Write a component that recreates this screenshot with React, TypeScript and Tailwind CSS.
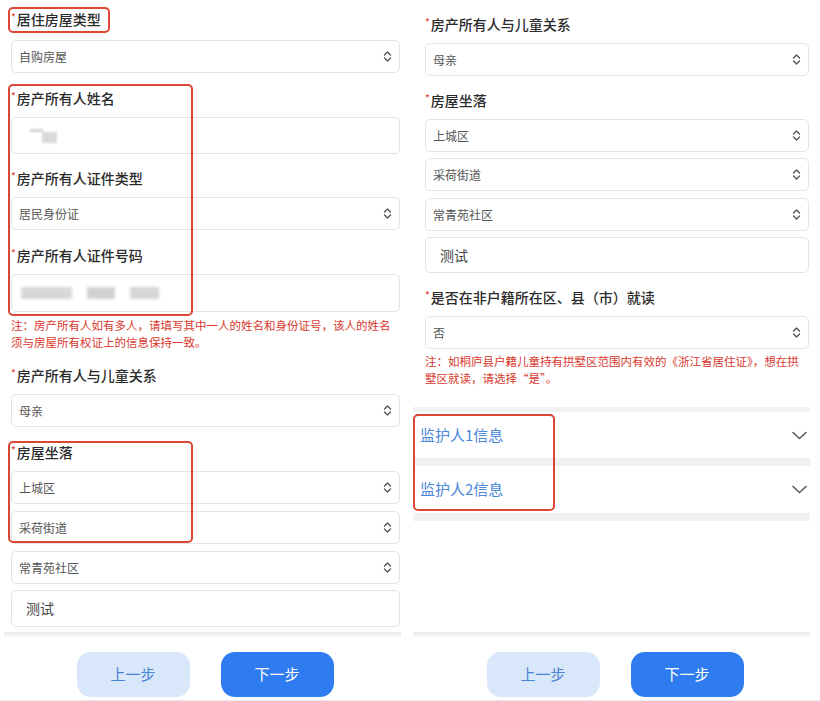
import React from "react";

const font = "font-['Noto_Sans_CJK_SC',sans-serif]";

function UpDown() {
    return (
        <svg width="9" height="13" viewBox="0 0 9 13" fill="none">
            <path d="M1.5 5 L4.5 2 L7.5 5" stroke="#555" strokeWidth="1.4" strokeLinecap="round" strokeLinejoin="round" />
            <path d="M1.5 8 L4.5 11 L7.5 8" stroke="#555" strokeWidth="1.4" strokeLinecap="round" strokeLinejoin="round" />
        </svg>
    );
}

function Chevron() {
    return (
        <svg width="15" height="9" viewBox="0 0 15 9" fill="none">
            <path d="M1 1.5 L7.5 7.5 L14 1.5" stroke="#555" strokeWidth="1.5" strokeLinecap="round" strokeLinejoin="round" />
        </svg>
    );
}

function Label({ text, className = "" }: { text: string; className?: string }) {
    return (
        <div className={`h-5 flex items-center text-[14px] font-medium text-[#2b2b2b] ${className}`}>
            <span className="text-[#e2463a] text-[10px] leading-none self-start mt-[3px] mr-[1px]">*</span>
            {text}
        </div>
    );
}

function Select({ value, className = "" }: { value: string; className?: string }) {
    return (
        <div className={`h-[33px] border border-[#e4e4e4] rounded-[5px] flex items-center justify-between pl-[7px] pr-[7px] text-[12px] text-[#555] bg-white ${className}`}>
            <span>{value}</span>
            <UpDown />
        </div>
    );
}

function Input({ children, className = "" }: { children?: React.ReactNode; className?: string }) {
    return (
        <div className={`border border-[#e4e4e4] rounded-[5px] flex items-center pl-[14px] text-[14px] text-[#444] bg-white ${className}`}>
            {children}
        </div>
    );
}

function Note({ children, className = "" }: { children: React.ReactNode; className?: string }) {
    return <p className={`text-[11.5px] leading-[17px] text-[#d8382d] ${className}`}>{children}</p>;
}

function Footer() {
    return (
        <div className="h-[64px] border-b border-[#e8e8e8] flex justify-center gap-[31px] pt-[15px]">
            <button className="w-[113px] h-[45px] rounded-[14px] bg-[#d8e7f9] text-[#4a83d4] text-[15px]">上一步</button>
            <button className="w-[113px] h-[45px] rounded-[14px] bg-[#2e7cf0] text-white text-[15px]">下一步</button>
        </div>
    );
}

function Mark({ className }: { className: string }) {
    return <div className={`absolute border-2 border-[#db4733] rounded-[5px] pointer-events-none ${className}`} />;
}

function Band({ className = "" }: { className?: string }) {
    return <div className={`h-[5px] bg-gradient-to-b from-[#ececec] to-[#f7f7f7] ${className}`} />;
}

export default function App() {
    return (
        <div className={`w-[820px] h-[701px] bg-white flex overflow-hidden ${font}`}>
            {/* left screen */}
            <div className="relative w-[410px] flex flex-col">
                <div className="h-[637px] flex flex-col">
                    <div className="pl-[11px] pr-[10px] pt-[9px]">
                        <Label text="居住房屋类型" />
                        <Select value="自购房屋" className="mt-[11px]" />
                        <Label text="房产所有人姓名" className="mt-[15px]" />
                        <Input className="mt-[9px] h-[37px]">
                            <div className="relative w-[30px] h-[20px] blur-[1px]">
                                <div className="absolute left-[4px] top-[3px] w-[13px] h-[3px] bg-[#d4d4d4]" />
                                <div className="absolute left-[16px] top-[6px] w-[15px] h-[11px] bg-[#d9d9d9]" />
                            </div>
                        </Input>
                        <Label text="房产所有人证件类型" className="mt-[14px]" />
                        <Select value="居民身份证" className="mt-[9px]" />
                        <Label text="房产所有人证件号码" className="mt-[15px]" />
                        <Input className="mt-[9px] h-[38px] !pl-[9px]">
                            <div className="flex items-center gap-[15px] blur-[1.5px]">
                                <div className="w-[51px] h-[12px] bg-[#d8d8d8]" />
                                <div className="w-[28px] h-[12px] bg-[#d2d2d2]" />
                                <div className="w-[29px] h-[12px] bg-[#d6d6d6]" />
                            </div>
                        </Input>
                        <Note className="mt-[5px]">注：房产所有人如有多人，请填写其中一人的姓名和身份证号，该人的姓名须与房屋所有权证上的信息保持一致。</Note>
                        <Label text="房产所有人与儿童关系" className="mt-[14px]" />
                        <Select value="母亲" className="mt-[9px]" />
                        <Label text="房屋坐落" className="mt-[15px]" />
                        <Select value="上城区" className="mt-[9px]" />
                        <Select value="采荷街道" className="mt-[7px]" />
                        <Select value="常青苑社区" className="mt-[7px]" />
                        <Input className="mt-[6px] h-[37px]">测试</Input>
                    </div>
                    <div className="flex-1" />
                    <Band className="ml-[4px] mr-[9px]" />
                </div>
                <Footer />

                <Mark className="left-[8px] top-[7px] w-[102px] h-[26px]" />
                <Mark className="left-[8px] top-[84px] w-[185px] h-[232px]" />
                <Mark className="left-[8px] top-[441px] w-[185px] h-[102px]" />
            </div>

            {/* right screen */}
            <div className="relative w-[410px] flex flex-col">
                <div className="h-[637px] flex flex-col">
                    <div className="pl-[15px] pr-[11px] pt-[14px]">
                        <Label text="房产所有人与儿童关系" />
                        <Select value="母亲" className="mt-[9px]" />
                        <Label text="房屋坐落" className="mt-[14px]" />
                        <Select value="上城区" className="mt-[9px]" />
                        <Select value="采荷街道" className="mt-[6px]" />
                        <Select value="常青苑社区" className="mt-[7px]" />
                        <Input className="mt-[6px] h-[36px]">测试</Input>
                        <Label text="是否在非户籍所在区、县（市）就读" className="mt-[14px]" />
                        <Select value="否" className="mt-[9px]" />
                        <Note className="mt-[4px]">注：如桐庐县户籍儿童持有拱墅区范围内有效的《浙江省居住证》，想在拱墅区就读，请选择“是”。</Note>
                    </div>
                    <div className="mt-[20px] ml-[3px] mr-[10px]">
                        <div className="h-[5px] bg-[#f1f1f1]" />
                        <div className="h-[46px] flex items-center justify-between pl-[7px] pr-[3px]">
                            <span className="text-[15px] text-[#4a87d9]">监护人1信息</span>
                            <Chevron />
                        </div>
                        <div className="h-[8px] bg-[#f1f1f1]" />
                        <div className="h-[47px] flex items-center justify-between pl-[7px] pr-[3px]">
                            <span className="text-[15px] text-[#4a87d9]">监护人2信息</span>
                            <Chevron />
                        </div>
                        <div className="h-[8px] bg-[#f1f1f1]" />
                    </div>
                    <div className="flex-1" />
                    <Band className="ml-[3px] mr-[10px]" />
                </div>
                <Footer />

                <Mark className="left-[3px] top-[414px] w-[142px] h-[97px]" />
            </div>
        </div>
    );
}
